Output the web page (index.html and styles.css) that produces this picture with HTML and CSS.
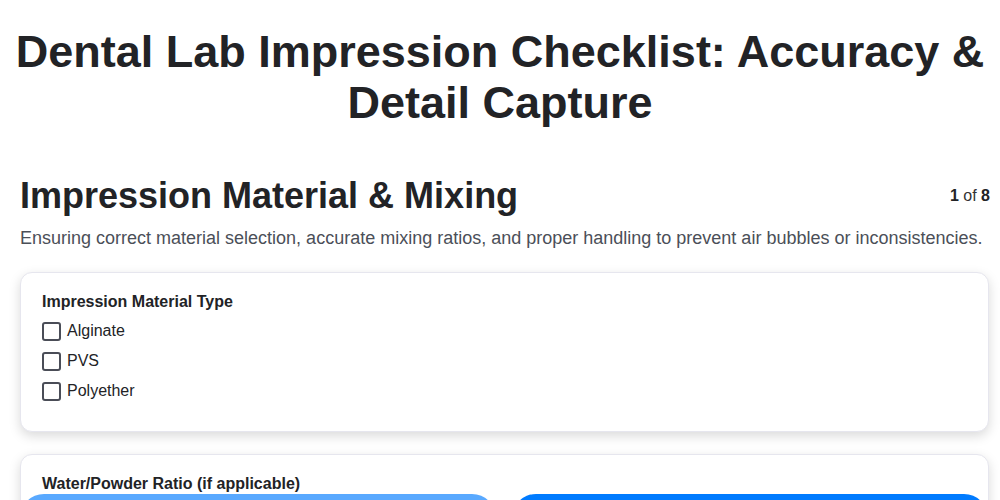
FILE: index.html
```html
<!DOCTYPE html>
<html lang="en">
<head>
    <meta charset="UTF-8">
    <meta name="viewport" content="width=device-width, initial-scale=1.0">
    <title>Dental Lab Impression Checklist</title>
    <link rel="stylesheet" href="styles.css">
</head>
<body>
    <h1 class="page-title">Dental Lab Impression Checklist: Accuracy &amp; Detail Capture</h1>

    <div class="container">
        <div class="section-header">
            <h2 class="section-title">Impression Material &amp; Mixing</h2>
            <div class="step-count"><b>1</b> of <b>8</b></div>
        </div>
        <p class="section-desc">Ensuring correct material selection, accurate mixing ratios, and proper handling to prevent air bubbles or inconsistencies.</p>

        <div class="card">
            <div class="field-label">Impression Material Type</div>
            <label class="check-row"><input type="checkbox"><span>Alginate</span></label>
            <label class="check-row"><input type="checkbox"><span>PVS</span></label>
            <label class="check-row"><input type="checkbox"><span>Polyether</span></label>
        </div>

        <div class="card">
            <div class="field-label">Water/Powder Ratio (if applicable)</div>
        </div>
    </div>

    <div class="nav-buttons">
        <button class="btn btn-prev" disabled>Previous</button>
        <button class="btn btn-next">Next</button>
    </div>
</body>
</html>
```

FILE: styles.css
```css
* {
    margin: 0;
    padding: 0;
    box-sizing: border-box;
}

body {
    font-family: "Liberation Sans", Arial, sans-serif;
    background-color: #ffffff;
    color: #222326;
}

.page-title {
    font-size: 45px;
    line-height: 51px;
    font-weight: bold;
    text-align: center;
    padding-top: 26px;
    color: #222326;
}

.container {
    padding: 46px 10px 0 20px;
}

.section-header {
    display: flex;
    align-items: center;
    justify-content: space-between;
}

.section-title {
    font-size: 36px;
    line-height: 43px;
    font-weight: bold;
}

.step-count {
    font-size: 16px;
    color: #333;
}

.step-count b {
    color: #222326;
}

.section-desc {
    font-size: 18px;
    line-height: 24px;
    color: #4b4f58;
    margin-top: 9px;
}

.card {
    background: white;
    border: 1px solid #e6e6ee;
    border-radius: 12px;
    box-shadow: 0 4px 12px rgba(0, 0, 0, 0.15);
    padding: 19px 21px 24px;
    margin-top: 22px;
    margin-right: 1px;
    min-height: 160px;
}

.field-label {
    font-size: 16px;
    font-weight: bold;
    line-height: 20px;
    margin-bottom: 4px;
}

.check-row {
    display: flex;
    align-items: center;
    gap: 6px;
    font-size: 16px;
    height: 30px;
}

.check-row input {
    appearance: none;
    width: 19px;
    height: 19px;
    border: 2px solid #4a4d57;
    border-radius: 3px;
    background: white;
}

.nav-buttons {
    position: fixed;
    left: 20px;
    right: 12px;
    top: 494px;
    display: flex;
    gap: 16px;
}

.btn {
    flex: 1;
    height: 48px;
    border: none;
    border-radius: 24px;
    background-color: #007bff;
    color: white;
    font-size: 16px;
    font-family: inherit;
}

.btn-prev {
    opacity: 0.65;
}
```
